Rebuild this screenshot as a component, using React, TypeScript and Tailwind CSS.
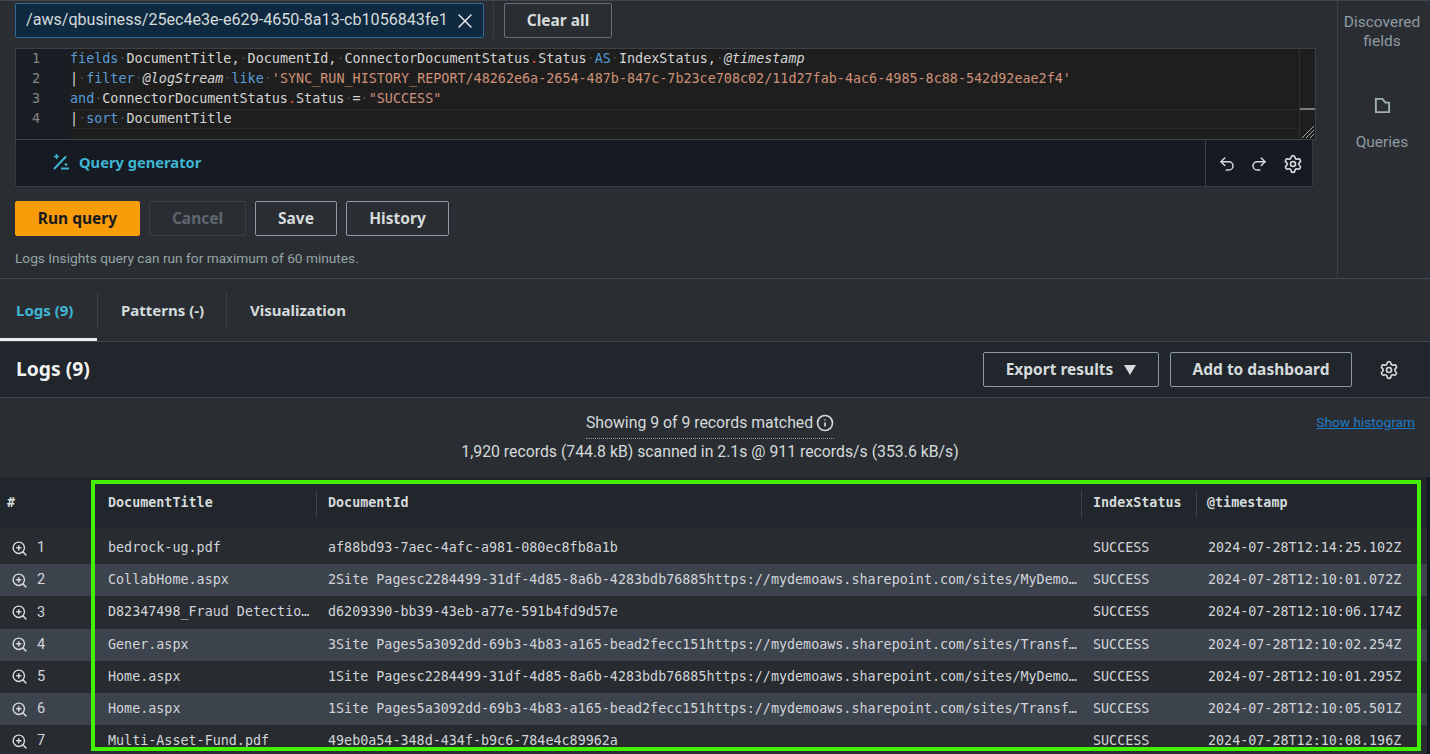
import React from "react";
import { X, ZoomIn, Undo2, Redo2, Settings, Info } from "lucide-react";

const sans = "font-['Roboto',sans-serif]";
const bold = "font-['Noto_Sans',sans-serif] font-bold";
const mono = "font-['DejaVu_Sans_Mono',monospace]";

const K = ({ children }: { children: React.ReactNode }) => <span className="text-[#569cd6]">{children}</span>;
const S = ({ children }: { children: React.ReactNode }) => <span className="text-[#ce9178]">{children}</span>;
const D = () => <span className="text-[#45494e]">·</span>;
const R = () => <span className="text-[#f14c4c]">.</span>;
const I = ({ children }: { children: React.ReactNode }) => <span className="italic">{children}</span>;

const rows = [
  ["bedrock-ug.pdf", "af88bd93-7aec-4afc-a981-080ec8fb8a1b", "2024-07-28T12:14:25.102Z"],
  ["CollabHome.aspx", "2Site Pagesc2284499-31df-4d85-8a6b-4283bdb76885https://mydemoaws.sharepoint.com/sites/MyDemo…", "2024-07-28T12:10:01.072Z"],
  ["D82347498_Fraud Detectio…", "d6209390-bb39-43eb-a77e-591b4fd9d57e", "2024-07-28T12:10:06.174Z"],
  ["Gener.aspx", "3Site Pages5a3092dd-69b3-4b83-a165-bead2fecc151https://mydemoaws.sharepoint.com/sites/Transf…", "2024-07-28T12:10:02.254Z"],
  ["Home.aspx", "1Site Pagesc2284499-31df-4d85-8a6b-4283bdb76885https://mydemoaws.sharepoint.com/sites/MyDemo…", "2024-07-28T12:10:01.295Z"],
  ["Home.aspx", "1Site Pages5a3092dd-69b3-4b83-a165-bead2fecc151https://mydemoaws.sharepoint.com/sites/Transf…", "2024-07-28T12:10:05.501Z"],
  ["Multi-Asset-Fund.pdf", "49eb0a54-348d-434f-b9c6-784e4c89962a", "2024-07-28T12:10:08.196Z"],
];

const Gear = ({ size = 20 }: { size?: number }) => <Settings size={size} strokeWidth={2} className="text-[#d5dbdb]" />;

function Editor() {
  const line = "h-[20px] leading-[20px] whitespace-pre";
  return (
    <div className={`flex h-[92px] w-[1301px] border border-[#3c4149] bg-[#1e1e1e] text-[13.42px] text-[#d4d4d4] ${mono}`}>
      <div className="w-[54px] shrink-0 bg-[#1a1d23] pr-[30px] text-right text-[#858585]">
        {[1, 2, 3, 4].map((n) => (
          <div key={n} className="h-[20px] leading-[20px]">{n}</div>
        ))}
      </div>
      <div className="min-w-0 flex-1">
        <div className={line}><K>fields</K><D />DocumentTitle,<D />DocumentId,<D />ConnectorDocumentStatus<R />Status<D /><K>AS</K><D />IndexStatus,<D /><I>@timestamp</I></div>
        <div className={line}>|<D /><K>filter</K><D /><I>@logStream</I><D /><K>like</K><D /><S>'SYNC_RUN_HISTORY_REPORT/48262e6a-2654-487b-847c-7b23ce708c02/11d27fab-4ac6-4985-8c88-542d92eae2f4'</S></div>
        <div className={line}><K>and</K><D />ConnectorDocumentStatus<R />Status<D />=<D /><S>"SUCCESS"</S></div>
        <div className="h-[20px] whitespace-pre border-y border-[#2a2a2a] leading-[18px]">|<D /><K>sort</K><D />DocumentTitle</div>
      </div>
      <div className="flex w-[16px] shrink-0 flex-col border-l border-[#2e2e2e]">
        <div className="h-[61px] border-b-2 border-[#7d7d7d]" />
        <div className="flex flex-1 items-end justify-end">
          <svg width="14" height="14" viewBox="0 0 14 14" fill="none" stroke="#a0a4a8" strokeWidth="1">
            <path d="M1 13 13 1M5 13 13 5M9 13 13 9" />
          </svg>
        </div>
      </div>
    </div>
  );
}

function Btn({ className, children }: { className: string; children: React.ReactNode }) {
  return (
    <div className={`flex h-[35px] items-center justify-center rounded-[2px] border text-[15.5px] ${bold} ${className}`}>
      {children}
    </div>
  );
}

function TopPanel() {
  return (
    <div className="flex h-[278px] border-t border-[#3f4650]">
      <div className="w-[1337px] shrink-0 pl-[15px]">
        <div className="mt-[2px] flex h-[35px] items-center">
          <div className="flex h-[35px] w-[469px] items-center justify-between rounded-[2px] border border-[#2f6c93] bg-[#0f2a40] pl-[10px] pr-[6px] text-[16.1px] text-[#d5dbdb]">
            <span>/aws/qbusiness/25ec4e3e-e629-4650-8a13-cb1056843fe1</span>
            <X size={24} strokeWidth={1.5} className="text-[#e5e7eb]" />
          </div>
          <div className="ml-[9px] h-[35px] w-px bg-[#3c4149]" />
          <Btn className="ml-[10px] w-[108px] border-[#687078] text-[#d5dbdb]">Clear all</Btn>
        </div>
        <div className="mt-[10px]"><Editor /></div>
        <div className="flex h-[47px] w-[1298px] border border-t-0 border-[#353a42] bg-[#161a22]">
          <div className="flex flex-1 items-center pb-[2px] pl-[36px]">
            <svg width="18" height="18" viewBox="0 0 18 18" fill="none" stroke="#3fb6d3" strokeWidth="1.9">
              <path d="M2 16 14 3.5" />
              <path d="M9 15.5h8" />
              <path d="M4.5 1v5M2 3.5h5" strokeWidth="1.5" />
              <path d="M14 10v3M12.5 11.5h3" strokeWidth="1.2" />
            </svg>
            <span className={`ml-[9px] text-[14.7px] text-[#3fb6d3] ${bold}`}>Query generator</span>
          </div>
          <div className="flex w-[107px] items-center border-l border-[#3c4149] pl-[12px] pt-[2px]">
            <Undo2 size={18} strokeWidth={2} className="text-[#d5dbdb]" />
            <Redo2 size={18} strokeWidth={2} className="ml-[14px] text-[#d5dbdb]" />
            <div className="ml-[15px]"><Gear /></div>
          </div>
        </div>
        <div className="mt-[14px] flex">
          <Btn className="w-[125px] border-[#f89c0a] bg-[#f89c0a] text-[#16191f]">Run query</Btn>
          <Btn className="ml-[9px] w-[97px] border-[#3c4149] text-[#5f6670]">Cancel</Btn>
          <Btn className="ml-[9px] w-[82px] border-[#8d99a8] text-[#d5dbdb]">Save</Btn>
          <Btn className="ml-[9px] w-[103px] border-[#8d99a8] text-[#d5dbdb]">History</Btn>
        </div>
        <div className="mt-[12px] text-[13.7px] leading-[20px] text-[#95a5a6]">Logs Insights query can run for maximum of 60 minutes.</div>
      </div>
      <div className="flex flex-1 flex-col items-center border-l border-[#3c4149] pr-[4px] pt-[12px] text-center text-[15.5px] leading-[19px] text-[#8d9ba3]">
        <div>Discovered<br />fields</div>
        <svg className="mt-[46px]" width="17" height="17" viewBox="0 0 18 18" fill="none" stroke="#9fb0b3" strokeWidth="2">
          <path d="M2 2h7l3 4h4v10H2z" strokeLinejoin="miter" />
        </svg>
        <div className="mt-[19px]">Queries</div>
      </div>
    </div>
  );
}

function Tabs() {
  return (
    <div className={`flex h-[64px] border-t border-b border-[#414750] text-[15px] text-[#d5dbdb] ${bold}`}>
      <div className="relative flex w-[97px] items-center pl-[16px] text-[#3fb6d3]">
        Logs (9)
        <div className="absolute bottom-0 left-0 h-[3px] w-full bg-[#eaeded]" />
      </div>
      <div className="my-[13px] w-px bg-[#3c4149]" />
      <div className="flex w-[128px] items-center pl-[23px]">Patterns (-)</div>
      <div className="my-[13px] w-px bg-[#3c4149]" />
      <div className="flex items-center pl-[23px]">Visualization</div>
    </div>
  );
}

function LogsHeader() {
  return (
    <div className="flex h-[56px] items-center border-b border-[#414750] bg-[#21252c] pl-[16px]">
      <div className={`flex-1 text-[19.3px] text-[#f2f3f3] ${bold}`}>Logs (9)</div>
      <Btn className="w-[176px] gap-[11px] border-[#8d99a8] text-[#d5dbdb]">
        Export results
        <svg width="12" height="10" viewBox="0 0 12 10" fill="#d5dbdb"><path d="M0 0h12L6 10z" /></svg>
      </Btn>
      <Btn className="ml-[11px] w-[182px] border-[#8d99a8] text-[#d5dbdb]">Add to dashboard</Btn>
      <div className="ml-[27px] mr-[31px]"><Gear /></div>
    </div>
  );
}

function Stats() {
  return (
    <div className="relative h-[79px] pr-[10px] pt-[14px] text-center text-[15.8px] leading-[22px] text-[#d5dbdb]">
      <div className="flex justify-center">
        <span className="flex items-center gap-[3px] border-b border-dotted border-[#8d99a8] pb-[4px]">
          Showing 9 of 9 records matched
          <Info size={18} strokeWidth={2.2} />
        </span>
      </div>
      <div className="mt-[2px]">1,920 records (744.8 kB) scanned in 2.1s @ 911 records/s (353.6 kB/s)</div>
      <span className="absolute right-[15px] top-[13px] text-[13.7px] text-[#1f7ac4] underline">Show histogram</span>
    </div>
  );
}

const grid = "grid grid-cols-[96px_220px_765px_115px_231px]";

function Table() {
  return (
    <div className={`relative flex-1 overflow-hidden border-r-[3px] border-[#14181e] text-[13.38px] ${mono}`}>
      <div className={`${grid} h-[51px] items-center bg-[#21252c] pt-[2px] font-bold text-[#d5dbdb]`}>
        <div className="pl-[7px]">#</div>
        <div className="flex h-[28px] items-center pl-[12px]">DocumentTitle</div>
        <div className="flex h-[28px] items-center border-l border-[#3c4149] pl-[11px]">DocumentId</div>
        <div className="flex h-[28px] items-center border-l border-[#3c4149] pl-[11px]">IndexStatus</div>
        <div className="flex h-[28px] items-center border-l border-[#3c4149] pl-[10px]">@timestamp</div>
      </div>
      <div className="h-[4px] bg-[#282b30]" />
      {rows.map((r, i) => (
        <div key={i} className={`${grid} h-[32.2px] items-center whitespace-nowrap text-[#d1d5db] ${i % 2 ? "bg-[#3d434d]" : "bg-[#282b30]"}`}>
          <div className={`flex items-center pl-[11px] text-[14.5px] ${sans}`}>
            <ZoomIn size={17} strokeWidth={2} className="text-[#d5dbdb]" />
            <span className="ml-[9px]">{i + 1}</span>
          </div>
          <div className="pl-[12px]">{r[0]}</div>
          <div className="pl-[12px]">{r[1]}</div>
          <div className="pl-[12px]">SUCCESS</div>
          <div className="pl-[12px]">{r[2]}</div>
        </div>
      ))}
      <div className="pointer-events-none absolute bottom-[3px] left-[91px] right-[6px] top-[3px] border-[4px] border-[#44f000]" />
    </div>
  );
}

export default function App() {
  return (
    <div className={`flex h-[754px] w-[1430px] flex-col overflow-hidden bg-[#2a2e33] ${sans}`}>
      <TopPanel />
      <Tabs />
      <LogsHeader />
      <Stats />
      <Table />
    </div>
  );
}
